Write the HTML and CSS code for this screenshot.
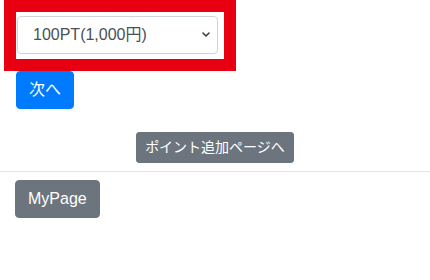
FILE: index.html
```html
<!DOCTYPE html>
<html>
<head>
  <meta charset="utf-8">
  <title>ポイント購入</title>
  <link rel="stylesheet" href="styles.css">
</head>
<body>
  <form class="buy">
    <div class="mark">
      <div class="select-wrap">
        <select class="form-control" name="point">
          <option value="100">100PT(1,000円)</option>
          <option value="500">500PT(5,000円)</option>
          <option value="1000">1000PT(10,000円)</option>
        </select>
        <svg class="caret" width="8" height="5" viewBox="0 0 8 5"><path d="M1 1l3 3 3-3" fill="none" stroke="#343a40" stroke-width="1.5" stroke-linecap="round" stroke-linejoin="round"/></svg>
      </div>
    </div>
    <button class="btn btn-primary" type="button">次へ</button>
  </form>
  <div class="center">
    <a class="btn btn-secondary btn-sm" href="#">ポイント追加ページへ</a>
  </div>
  <hr>
  <div class="foot">
    <a class="btn btn-secondary" href="#">MyPage</a>
  </div>
</body>
</html>
```

FILE: styles.css
```css
body {
  margin: 0;
  font-family: "Liberation Sans", Arial, "Noto Sans CJK JP", sans-serif;
  font-size: 16px;
  line-height: 1.5;
  color: #212529;
  background: #fff;
}
.buy {
  display: flex;
  flex-direction: column;
  align-items: flex-start;
  padding-left: 16px;
  margin: 0;
}
.mark {
  margin-left: -12px;
  border: 12px solid #e60012;
  padding: 4px 6px 5px 1px;
}
.select-wrap {
  position: relative;
  width: 201px;
}
.form-control {
  display: block;
  width: 100%;
  height: 38px;
  box-sizing: border-box;
  padding: 6px 28px 6px 15px;
  font: inherit;
  color: #495057;
  background: #fff;
  border: 1px solid #ced4da;
  border-radius: 4px;
  -webkit-appearance: none;
  appearance: none;
}
.caret {
  position: absolute;
  right: 8px;
  top: 16px;
  pointer-events: none;
}
.btn {
  display: inline-block;
  box-sizing: border-box;
  padding: 6px 12px;
  font: inherit;
  line-height: 1.5;
  color: #fff;
  text-decoration: none;
  border: 1px solid transparent;
  border-radius: 4px;
  cursor: pointer;
}
.btn-primary {
  background: #007bff;
  border-color: #007bff;
}
.btn-secondary {
  background: #6c757d;
  border-color: #6c757d;
}
.btn-sm {
  padding: 4px 8px;
  font-size: 14px;
  border-radius: 3px;
}
.center {
  margin-top: 23px;
  text-align: center;
  line-height: 0;
}
hr {
  margin: 8px 0 0;
  border: 0;
  border-top: 1px solid rgba(0, 0, 0, .1);
}
.foot {
  padding: 8px 15px;
}
```
